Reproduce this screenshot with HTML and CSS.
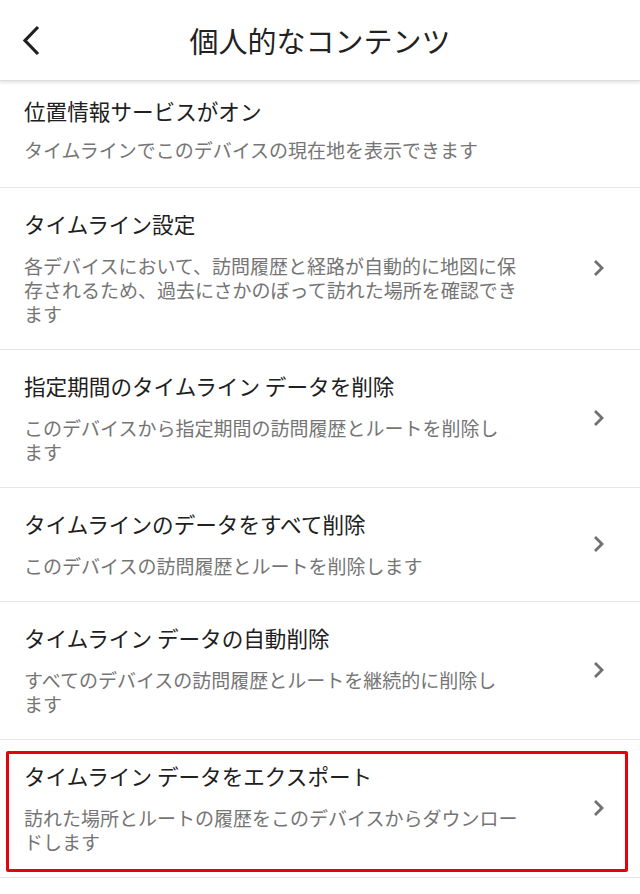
FILE: index.html
```html
<!DOCTYPE html>
<html lang="ja">
<head>
<meta charset="utf-8">
<link rel="stylesheet" href="styles.css">
</head>
<body>
<header class="appbar">
  <svg class="back" width="24" height="32" viewBox="0 0 24 32" aria-hidden="true">
    <path d="M18 2 L5 15.5 L18 29" fill="none" stroke="#202020" stroke-width="3.2"/>
  </svg>
  <h1 class="title">個人的なコンテンツ</h1>
</header>
<main class="list">
  <div class="item first">
    <div class="text">
      <div class="item-title">位置情報サービスがオン</div>
      <div class="item-desc">タイムラインでこのデバイスの現在地を表示できます</div>
    </div>
  </div>
  <div class="item">
    <div class="text">
      <div class="item-title">タイムライン設定</div>
      <div class="item-desc">各デバイスにおいて、訪問履歴と経路が自動的に地図に保存されるため、過去にさかのぼって訪れた場所を確認できます</div>
    </div>
    <svg class="chev" width="14" height="18" viewBox="0 0 14 18" aria-hidden="true"><path d="M3 2 L10 9 L3 16" fill="none" stroke="#707070" stroke-width="2.8"/></svg>
  </div>
  <div class="item">
    <div class="text narrow">
      <div class="item-title">指定期間のタイムライン データを削除</div>
      <div class="item-desc">このデバイスから指定期間の訪問履歴とルートを削除します</div>
    </div>
    <svg class="chev" width="14" height="18" viewBox="0 0 14 18" aria-hidden="true"><path d="M3 2 L10 9 L3 16" fill="none" stroke="#707070" stroke-width="2.8"/></svg>
  </div>
  <div class="item">
    <div class="text">
      <div class="item-title">タイムラインのデータをすべて削除</div>
      <div class="item-desc">このデバイスの訪問履歴とルートを削除します</div>
    </div>
    <svg class="chev" width="14" height="18" viewBox="0 0 14 18" aria-hidden="true"><path d="M3 2 L10 9 L3 16" fill="none" stroke="#707070" stroke-width="2.8"/></svg>
  </div>
  <div class="item">
    <div class="text narrow">
      <div class="item-title">タイムライン データの自動削除</div>
      <div class="item-desc">すべてのデバイスの訪問履歴とルートを継続的に削除します</div>
    </div>
    <svg class="chev" width="14" height="18" viewBox="0 0 14 18" aria-hidden="true"><path d="M3 2 L10 9 L3 16" fill="none" stroke="#707070" stroke-width="2.8"/></svg>
  </div>
  <div class="item highlighted">
    <div class="text">
      <div class="item-title">タイムライン データをエクスポート</div>
      <div class="item-desc">訪れた場所とルートの履歴をこのデバイスからダウンロードします</div>
    </div>
    <svg class="chev" width="14" height="18" viewBox="0 0 14 18" aria-hidden="true"><path d="M3 2 L10 9 L3 16" fill="none" stroke="#707070" stroke-width="2.8"/></svg>
    <div class="mark"></div>
  </div>
</main>
</body>
</html>
```

FILE: styles.css
```css
html, body {
  margin: 0;
  padding: 0;
  background: #ffffff;
}
body {
  font-family: "Noto Sans CJK JP", "Noto Sans", sans-serif;
  color: #212121;
  width: 640px;
  overflow: hidden;
}
.appbar {
  position: relative;
  height: 80px;
  display: flex;
  align-items: center;
  justify-content: center;
  background: #fff;
  border-bottom: 1px solid #dcdcdc;
  box-shadow: 0 2px 3px rgba(0,0,0,0.10);
  z-index: 1;
}
.back {
  position: absolute;
  left: 20px;
  top: 25px;
}
.title {
  margin: 0;
  font-size: 29px;
  font-weight: 400;
  line-height: 36px;
  color: #222;
  letter-spacing: 0;
}
.list {
  display: flex;
  flex-direction: column;
}
.item {
  position: relative;
  display: flex;
  align-items: center;
  padding: 22px 0 23px 24px;
  border-bottom: 1px solid #e6e6e6;
}
.item.first {
  padding-top: 16px;
  padding-bottom: 25px;
}
.item.first .item-desc {
  margin-top: 13px;
}
.text {
  width: 500px;
}
.text.narrow {
  width: 490px;
  margin-right: 10px;
}
.item-title {
  font-size: 21.6px;
  line-height: 28px;
  color: #202020;
  white-space: nowrap;
}
.item-desc {
  margin-top: 16px;
  font-size: 19px;
  line-height: 24px;
  color: #757575;
}
.chev {
  margin-left: 68px;
}
.mark {
  position: absolute;
  left: 6px;
  top: 11px;
  width: 616px;
  height: 115px;
  border: 3px solid #e8000b;
  border-radius: 2px;
  pointer-events: none;
}
```
